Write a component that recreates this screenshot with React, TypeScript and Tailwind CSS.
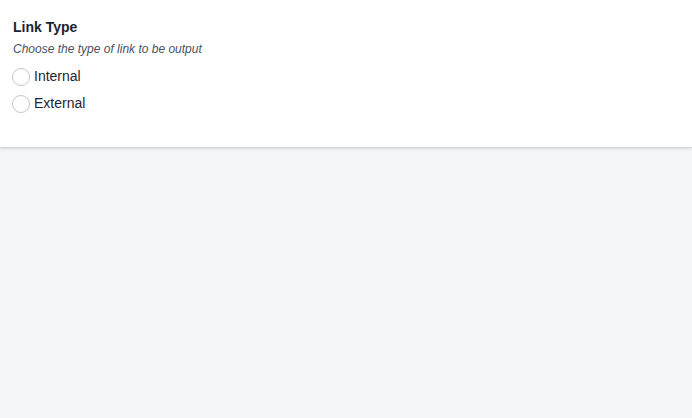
export default function App() {
  return (
    <div className="min-h-[418px] w-full bg-[#f5f6f8]" style={{ fontFamily: '"Liberation Sans", Arial, sans-serif' }}>
      <div className="bg-white px-[13px] pt-[17px] h-[148px] border-b border-[#d4d5d8] shadow-[0_1px_3px_rgba(0,0,0,0.12)]">
        <div className="text-[14px] leading-[20px] font-bold text-[#1b2433]">Link Type</div>
        <div className="mt-[3px] text-[12px] leading-[18px] italic text-[#4a5160]">Choose the type of link to be output</div>
        <div className="mt-[5px] flex flex-col">
          {["Internal", "External"].map((l) => (
            <label key={l} className="flex items-center h-[27px] gap-[4px] -ml-[1px]">
              <span className="w-[18px] h-[18px] rounded-full border border-[#c5c7cb] bg-white" />
              <span className="text-[14px] text-[#1f2430]">{l}</span>
            </label>
          ))}
        </div>
      </div>
    </div>
  );
}
